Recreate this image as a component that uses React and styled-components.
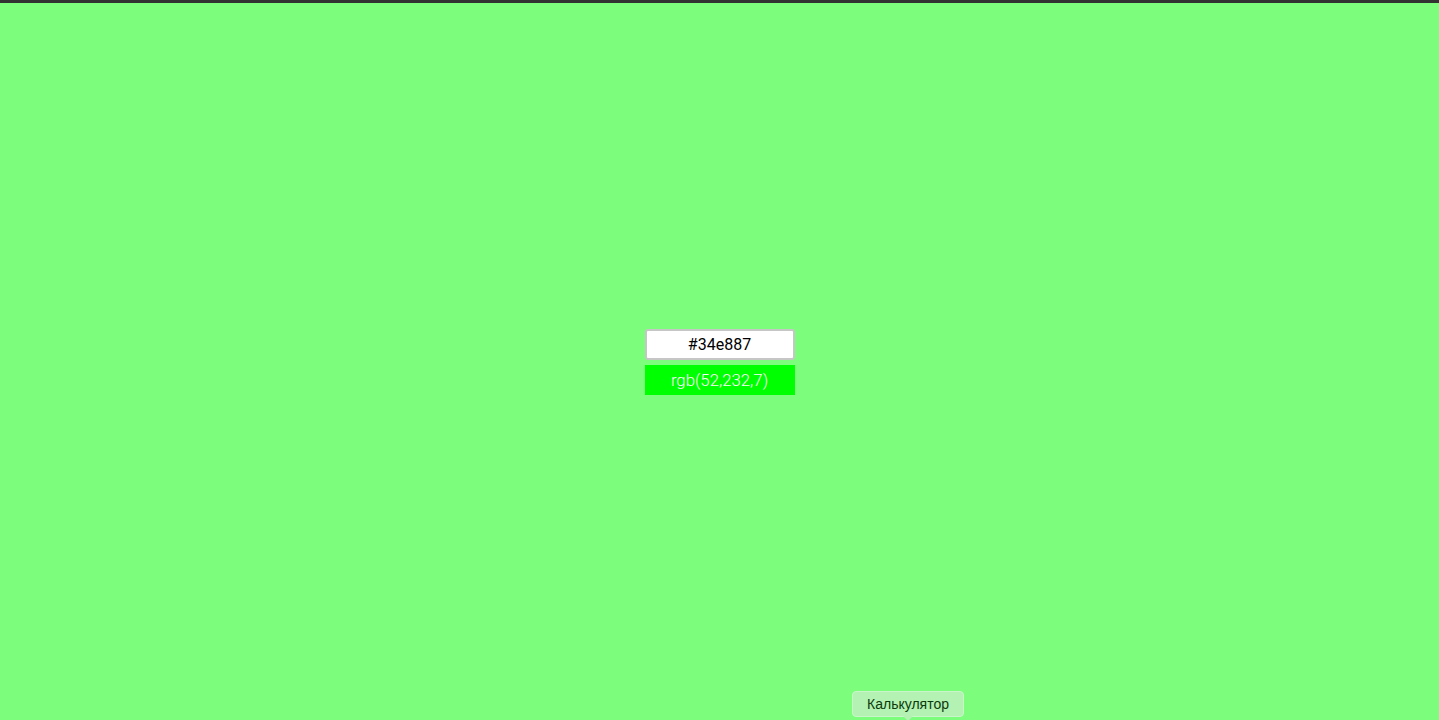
import React, { useState } from "react";
import styled, { createGlobalStyle } from "styled-components";

const Global = createGlobalStyle`
  html, body { margin: 0; padding: 0; height: 100%; }
  body { background: #7cfd7c; font-family: Roboto, "Liberation Sans", sans-serif; overflow: hidden; }
  #root { height: 100%; }
`;

const Page = styled.div`
  position: relative;
  height: 720px;
  box-sizing: border-box;
  border-top: 3px solid #323232;
  background: #7cfd7c;
  display: flex;
  align-items: center;
  justify-content: center;
`;

const Column = styled.div`
  display: flex;
  flex-direction: column;
  gap: 5px;
  width: 150px;
  margin-top: 1px;
`;

const HexInput = styled.input`
  box-sizing: border-box;
  width: 150px;
  height: 31px;
  border: 2px solid #c6c6c6;
  border-radius: 3px;
  background: #fff;
  text-align: center;
  font-family: Roboto, "Liberation Sans", sans-serif;
  font-size: 16px;
  color: #000;
  outline: none;
  padding: 0 4px;
  caret-color: #000;
`;

const Result = styled.div`
  height: 30px;
  background: ${(p) => p.$bg};
  color: #fff;
  font-size: 16.8px;
  font-weight: 300;
  display: flex;
  align-items: center;
  justify-content: center;
`;

const Tooltip = styled.div`
  position: absolute;
  left: 852px;
  top: 688px;
  width: 112px;
  height: 26px;
  box-sizing: border-box;
  background: #b3f2b3;
  border: 1px solid #c8f6c8;
  border-radius: 4px;
  color: #0c3a0c;
  font-family: "Liberation Sans", Roboto, sans-serif;
  font-size: 14px;
  display: flex;
  align-items: center;
  justify-content: center;
  &::after {
    content: "";
    position: absolute;
    left: 50%;
    bottom: -5px;
    margin-left: -5px;
    border-left: 5px solid transparent;
    border-right: 5px solid transparent;
    border-top: 5px solid #b3f2b3;
  }
`;

export default function App() {
  const [hex, setHex] = useState("#34e887");
  return (
    <>
      <Global />
      <Page>
        <Column>
          <HexInput value={hex} onChange={(e) => setHex(e.target.value)} autoFocus />
          <Result $bg="#00ff00">rgb(52,232,7)</Result>
        </Column>
        <Tooltip>Калькулятор</Tooltip>
      </Page>
    </>
  );
}
